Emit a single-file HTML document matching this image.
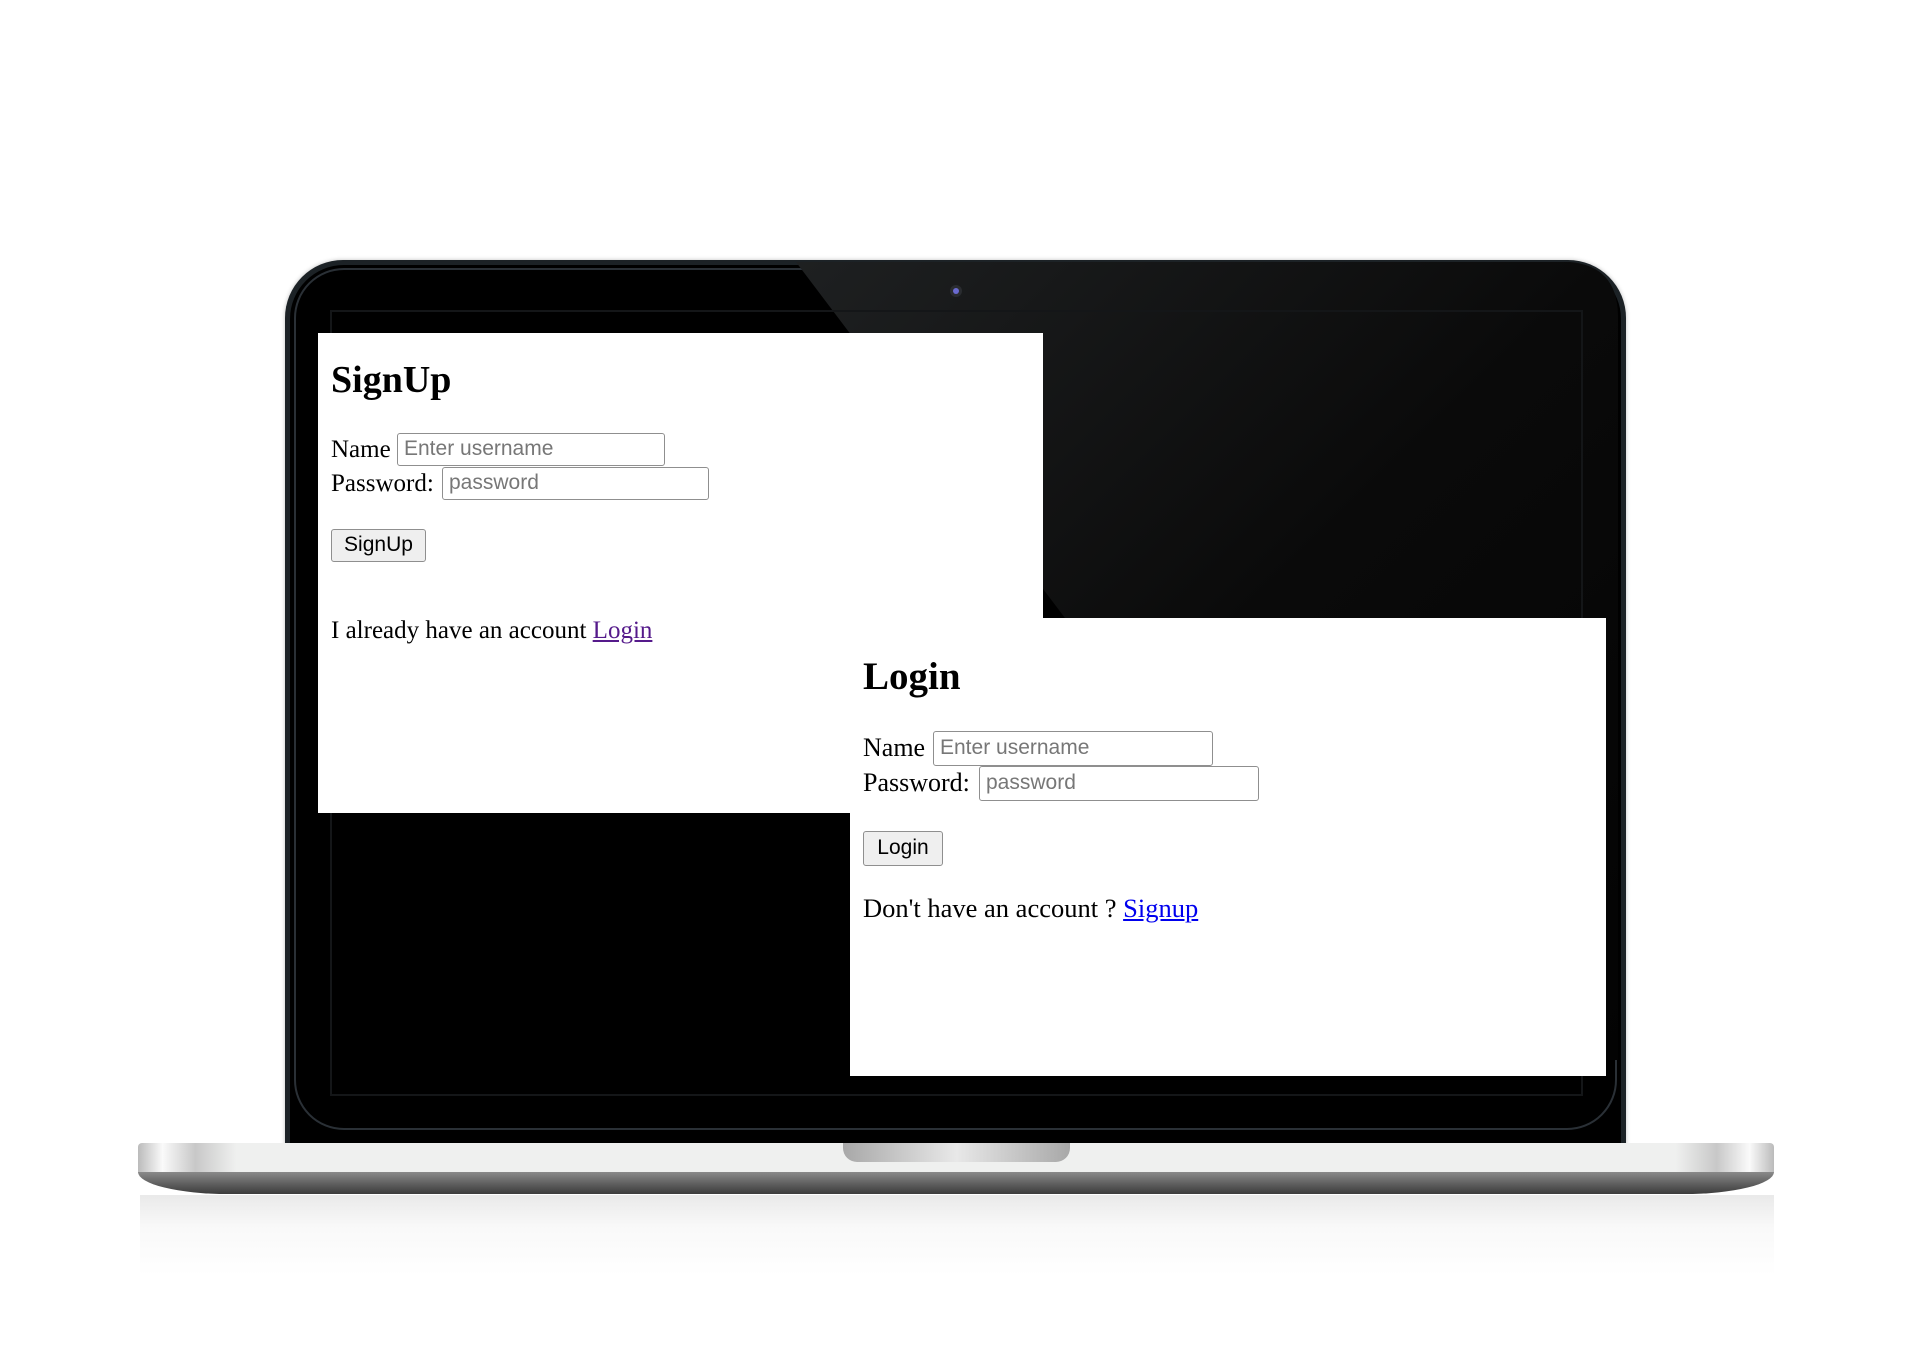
<!DOCTYPE html>
<html><head><meta charset="utf-8"><style>
html,body{margin:0;padding:0;background:#fff;width:1920px;height:1371px;overflow:hidden;position:relative}
.abs{position:absolute}
.lid{left:285px;top:260px;width:1341px;height:886px;background:#1c2226;border-radius:58px 58px 0 0;box-shadow:0 0 4px rgba(0,0,0,.25)}
.lid2{left:290px;top:265px;width:1331px;height:881px;background:#000;border-radius:54px 54px 0 0}
.lidedge{left:294px;top:268px;width:1323px;height:862px;border:2px solid #2a3036;border-radius:50px;box-sizing:border-box}
.inner{left:330px;top:310px;width:1253px;height:786px;border:2px solid #141618;box-sizing:border-box}
.panel{background:#fff;font-family:"Liberation Serif",serif;color:#000}
.t{position:absolute;font-family:"Liberation Serif",serif;font-size:25px;color:#000;white-space:nowrap;line-height:1}
.h{position:absolute;font-family:"Liberation Serif",serif;font-size:38px;font-weight:bold;line-height:1}
.inp{position:absolute;border:1.5px solid #8f8f8f;border-radius:3px;box-sizing:border-box;background:#fff;font-family:"Liberation Sans",sans-serif;font-size:21px;color:#777;padding-left:6px;line-height:30px}
.btn{position:absolute;border:1.5px solid #8f8f8f;border-radius:3px;box-sizing:border-box;background:#efefef;font-family:"Liberation Sans",sans-serif;font-size:21px;color:#000;text-align:center;line-height:30px}
a{text-decoration:underline}
</style></head><body>
<div class="abs" style="left:140px;top:1195px;width:1634px;height:80px;background:linear-gradient(#e4e4e4,#f7f7f7 40%,#fff);opacity:.8"></div>
<div class="abs lid"></div>
<div class="abs lid2"></div>
<div class="abs lidedge"></div>
<svg class="abs" style="left:0;top:0" width="1920" height="1371">
<defs><linearGradient id="g" x1="0" y1="0" x2="1" y2="1"><stop offset="0" stop-color="#1e2021"/><stop offset="0.5" stop-color="#0a0a0a"/><stop offset="1" stop-color="#030303"/></linearGradient></defs>
<path d="M796 262 L1570 262 Q1617 266 1618 315 L1618 1060 L1070 1060 L1070 618 L1065 618 Z" fill="url(#g)"/>
<circle cx="956" cy="291" r="6" fill="#2a2c30"/><circle cx="956" cy="291" r="3" fill="#6a6ad0"/>
</svg>
<div class="abs inner"></div>
<div class="abs" style="left:138px;top:1143px;width:1636px;height:30px;background:linear-gradient(90deg,#bbb 0,#fafafa 1.5%,#c8c8c8 3.5%,#eff0ef 6%,#eff0ef 94%,#c8c8c8 96.5%,#fafafa 98.5%,#bbb 100%);border-radius:4px 4px 0 0"></div>
<div class="abs" style="left:138px;top:1172px;width:1636px;height:22px;background:linear-gradient(#8a8a8a,#5a5a5a 60%,#3c3c3c);border-radius:0 0 90px 90px / 0 0 22px 22px"></div>
<div class="abs" style="left:843px;top:1143px;width:227px;height:19px;background:linear-gradient(90deg,#a8a8a8,#e8e8e8 50%,#a8a8a8);border-radius:0 0 14px 14px"></div>
<div class="abs panel" style="left:318px;top:333px;width:725px;height:480px"></div>
<div class="h" style="left:331px;top:361px">SignUp</div>
<div class="t" style="left:331px;top:437px">Name</div>
<div class="inp" style="left:397px;top:433px;width:268px;height:33px">Enter username</div>
<div class="t" style="left:331px;top:471px">Password:</div>
<div class="inp" style="left:442px;top:467px;width:267px;height:33px">password</div>
<div class="btn" style="left:331px;top:529px;width:95px;height:33px">SignUp</div>
<div class="t" style="left:331px;top:618px">I already have an account <a style="color:#551a8b">Login</a></div>
<div class="abs panel" style="left:850px;top:618px;width:756px;height:458px"></div>
<div class="h" style="left:863px;top:657px;font-size:39px">Login</div>
<div class="t" style="left:863px;top:735px;font-size:26px">Name</div>
<div class="inp" style="left:933px;top:731px;width:280px;height:35px;line-height:32px">Enter username</div>
<div class="t" style="left:863px;top:770px;font-size:26px">Password:</div>
<div class="inp" style="left:979px;top:766px;width:280px;height:35px;line-height:32px">password</div>
<div class="btn" style="left:863px;top:831px;width:80px;height:35px;line-height:32px">Login</div>
<div class="t" style="left:863px;top:895px;font-size:26.5px">Don't have an account ? <a style="color:#0000ee">Signup</a></div>
</body></html>
